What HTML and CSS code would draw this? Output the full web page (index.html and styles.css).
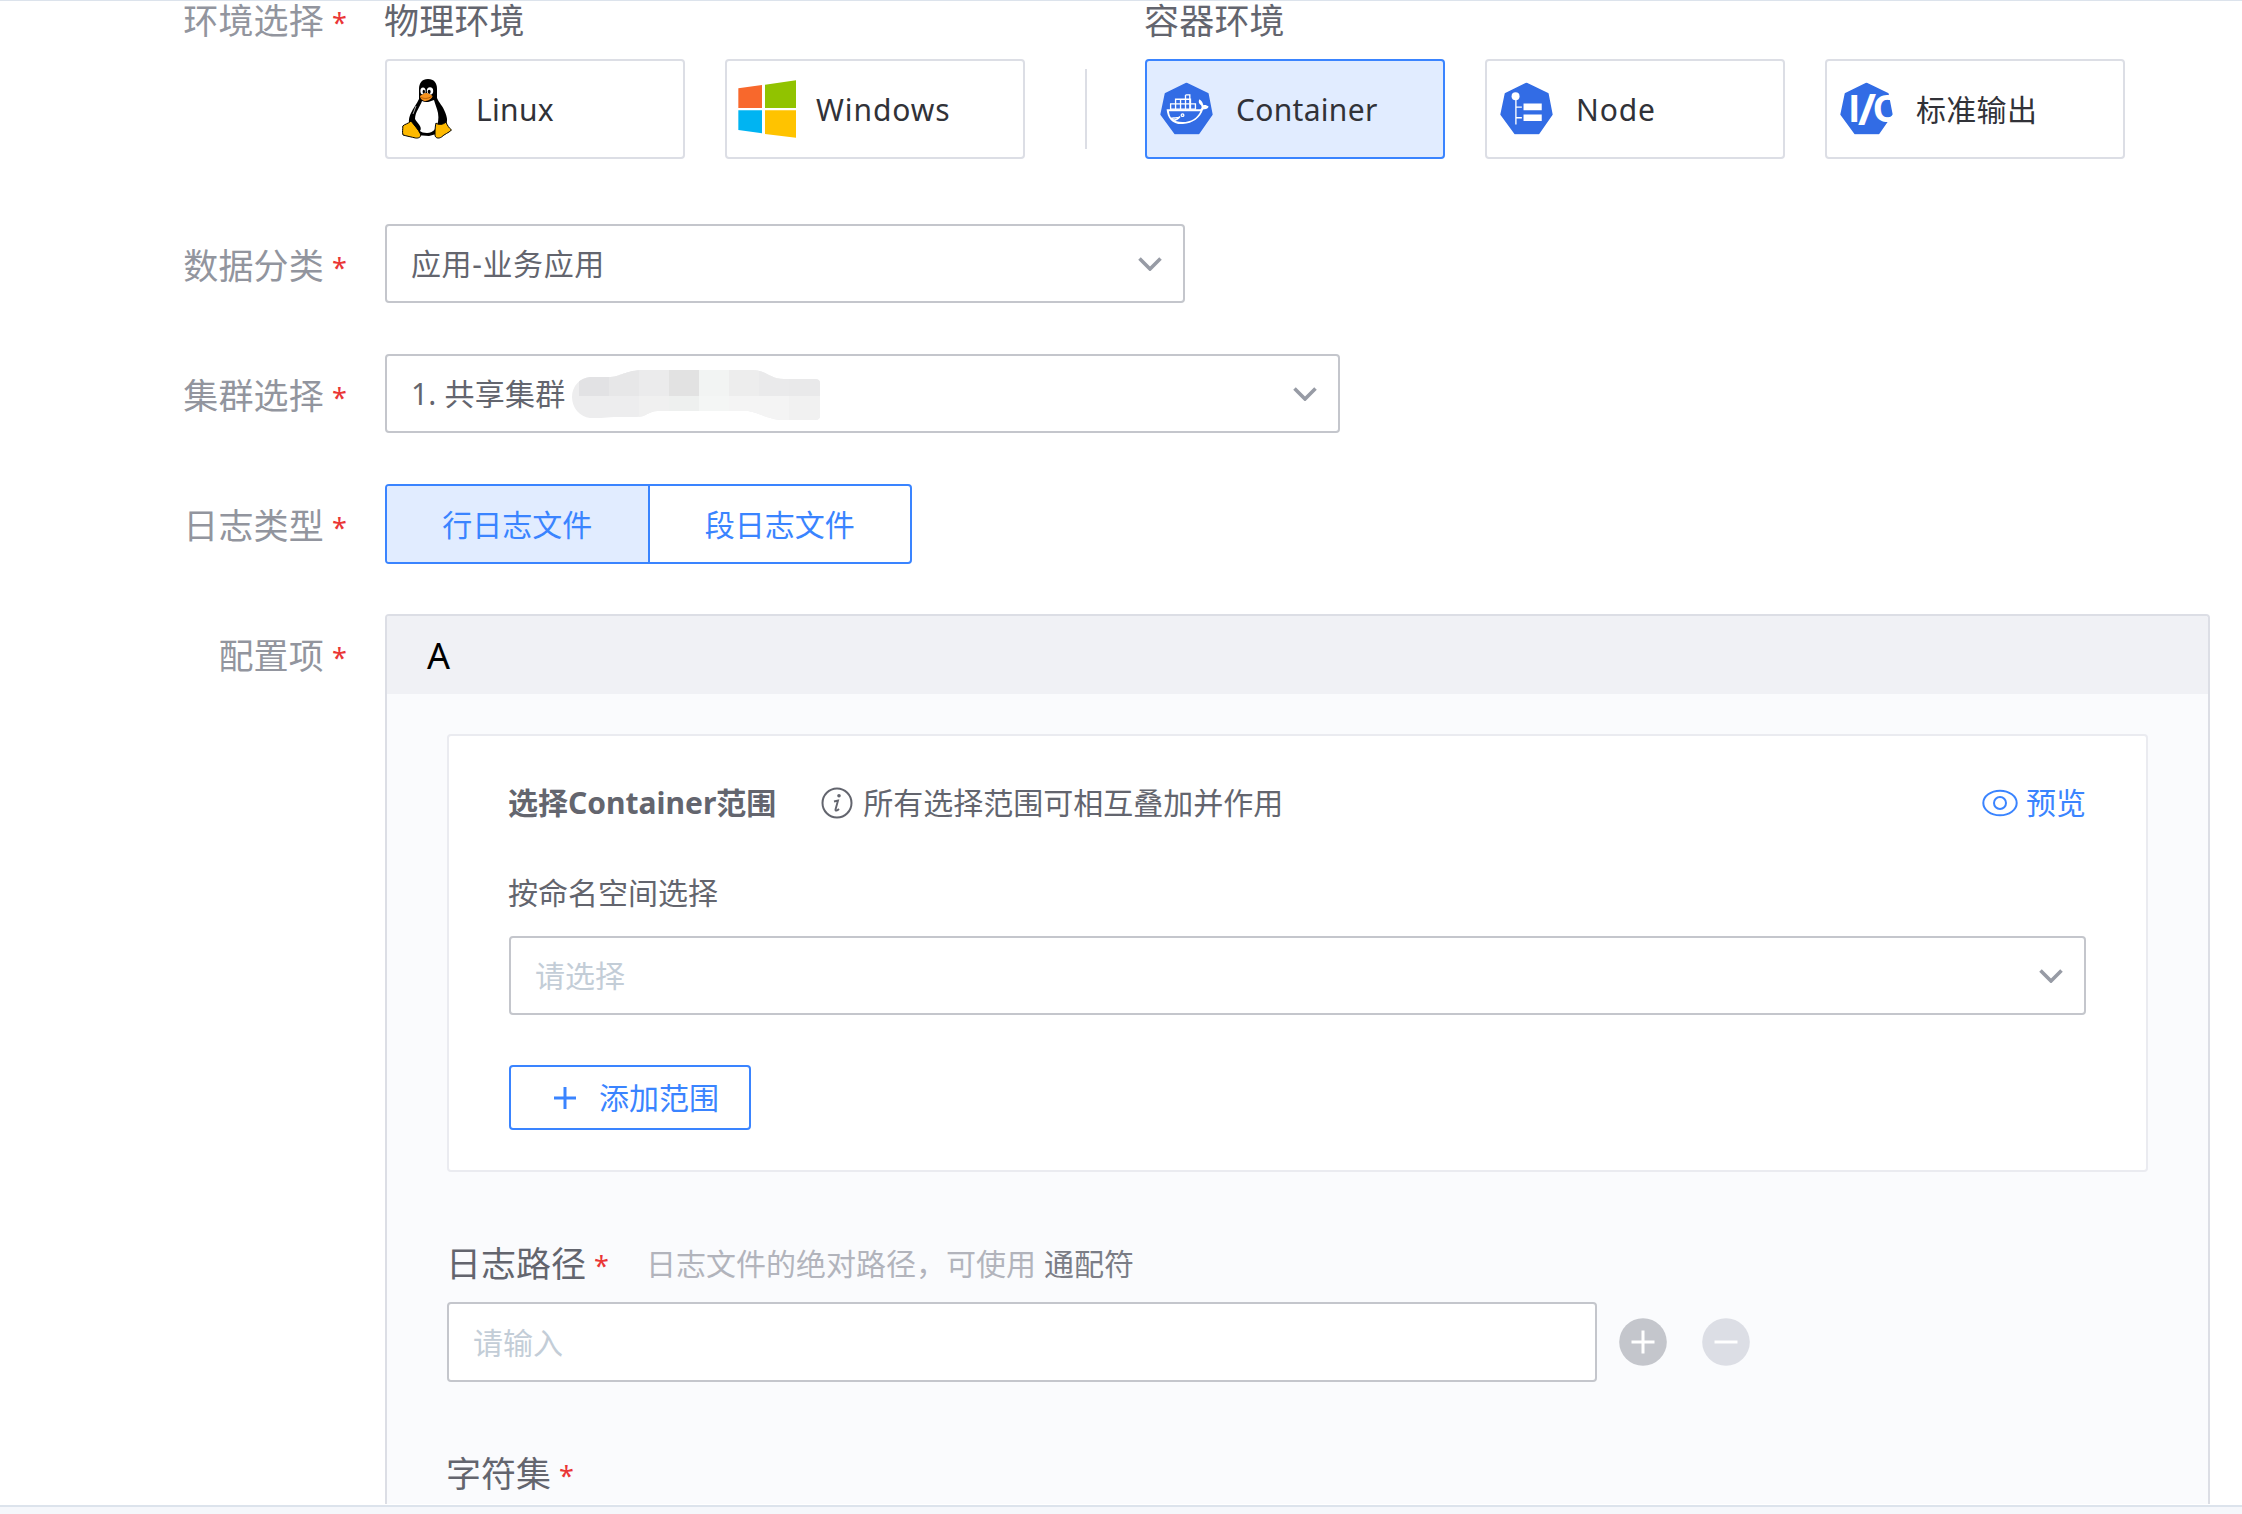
FILE: index.html
```html
<!DOCTYPE html>
<html lang="zh-CN">
<head>
<meta charset="utf-8">
<title>采集配置</title>
<link rel="stylesheet" href="styles.css">
</head>
<body>
<svg class="defs" width="0" height="0">
  <symbol id="chevron" viewBox="0 0 24 14"><path d="M1.5 1.5 12 12 22.5 1.5" fill="none" stroke="#979ba5" stroke-width="3.6"/></symbol>
  <symbol id="hept" viewBox="0 0 160 158"><path d="M80 4 144 35 156 97 116 154H46L4 97 17 35Z" fill="#326ce5" stroke="#326ce5" stroke-width="6" stroke-linejoin="round"/></symbol>
</svg>
<main class="form">
  <section class="row env-row">
    <div class="label">环境选择<i class="star">*</i></div>
    <div class="envs">
      <div class="env-group">
        <h2 class="env-title">物理环境</h2>
        <div class="cards">
          <div class="card">
            <span class="slot">
              <svg width="50" height="60" viewBox="0 0 50 60">
                <path d="M26 0c6 0 9 4 9 10v9c2 5 6 8 8 14 2 5 3 9 1 12l-6 9-11 3-13-1-6-10c-2-3-1-8 1-12 2-5 6-9 8-14V10c0-6 3-10 9-10z" fill="#000"/>
                <path d="M20 22c4 2 7 1 12-1 1 4 3 8 4 13 1 6 0 11-2 15-3 4-6 5-9 5-3 0-6-1-7-2 3-4-3-8-5-12 0-7 5-12 7-18z" fill="#fff"/>
                <ellipse cx="21" cy="12" rx="2.6" ry="3.5" fill="#fff"/><ellipse cx="28" cy="12" rx="3.2" ry="3.7" fill="#fff"/>
                <ellipse cx="21.8" cy="12.8" rx="1.2" ry="2" fill="#000"/><ellipse cx="27.2" cy="12.8" rx="1.5" ry="2.1" fill="#000"/>
                <path d="M18 17c2-1 4-3 6-3s5 2 6.500 3c0 2-4 5-7 5-2 0-5.500-2-5.500-5z" fill="#f7931e"/>
                <path d="M18.500 18c3 2 7 2 11-.5" fill="none" stroke="#9a4a00" stroke-width=".7"/>
                <path d="M14 27 11 35" stroke="#bbb" stroke-width=".9"/>
                <path d="M9 42c3 4 7 8 9.500 13 1 3-2 4.500-5 4-4-1-9-2-12.500-3-1-3 0-6-.2-9 2-2 5-2 8.200-5z" fill="#fdb900" stroke="#000" stroke-width="1"/>
                <path d="M34 44c2 2 7 2 10-1 1 3 3 6 5.500 8-3 3-7 4-10 7-3 2-6.500 1-6.500-2 0-4 0-8 1-12z" fill="#fdb900" stroke="#000" stroke-width="1"/>
              </svg>
            </span><span class="name">Linux</span>
          </div>
          <div class="card">
            <span class="slot">
              <svg width="58" height="58" viewBox="0 0 174 174">
                <path d="M1 25 72 15V84H1Z" fill="#f8682c"/><path d="M81 14 174 1V84H81Z" fill="#91c300"/>
                <path d="M1 91H72V160L1 150Z" fill="#00b4f2"/><path d="M81 91H174V173L81 162Z" fill="#ffc300"/>
              </svg>
            </span><span class="name wide">Windows</span>
          </div>
        </div>
      </div>
      <div class="divider"></div>
      <div class="env-group">
        <h2 class="env-title">容器环境</h2>
        <div class="cards">
          <div class="card active">
            <span class="slot">
              <svg class="k8s" width="53" height="53" viewBox="0 0 160 158">
                <use href="#hept"/>
                <path d="M20 81H122C127 77 126 73 124 69 117 64 115 59 119 51 126 55 129 62 131 69 137 68 143 70 147 74 143 81 136 82 130 82 122 107 99 124 69 126 38 128 22 108 20 81Z" fill="#fff"/>
                <path d="M27 87H122C113 108 94 119 68 120 54 120 44 116 38 110 48 111 54 109 58 105 46 105 38 107 33 106 29 100 28 94 27 87Z" fill="#326ce5"/>
                <path d="M37 114C47 115 55 110 60 103" fill="none" stroke="#fff" stroke-width="5"/>
                <circle cx="68" cy="99" r="4" fill="#326ce5" stroke="#fff" stroke-width="4"/>
                <path d="M32 65h75v16H32zM47 65V51h45v30M62 51v30M77 38v43M77 38h13v43M47 65v16" fill="none" stroke="#fff" stroke-width="4"/>
              </svg>
            </span><span class="name">Container</span>
          </div>
          <div class="card">
            <span class="slot">
              <svg class="k8s" width="53" height="53" viewBox="0 0 160 158">
                <use href="#hept"/>
                <circle cx="47" cy="42" r="12" fill="#fff"/>
                <path d="M48 50V127M48 75H66M48 107H66" stroke="#fff" stroke-width="4" fill="none"/>
                <path d="M71 64h55v20H71zM71 97h55v20H71z" fill="#fff"/>
              </svg>
            </span><span class="name wide">Node</span>
          </div>
          <div class="card">
            <span class="slot">
              <svg class="k8s" width="53" height="53" viewBox="0 0 160 158">
                <use href="#hept"/>
                <g class="io"><text x="24" y="121">I</text><text class="slash" x="54" y="129">/</text><text x="98" y="121">O</text></g>
              </svg>
            </span><span class="name">标准输出</span>
          </div>
        </div>
      </div>
    </div>
  </section>

  <section class="row">
    <div class="label">数据分类<i class="star">*</i></div>
    <div class="select w-category"><span class="category">应用-业务应用</span><svg class="chev"><use href="#chevron"/></svg></div>
  </section>

  <section class="row">
    <div class="label">集群选择<i class="star">*</i></div>
    <div class="select w-cluster">
      <span class="cluster">1. 共享集群</span>
      <svg class="mosaic" width="248" height="50" viewBox="0 0 248 50">
        <defs><clipPath id="blob"><path d="M0 27C0 16 8 8 18 7H34C48 8 52 0 72 0H180C194 0 198 9 212 9H243Q248 9 248 13V46Q248 50 243 50H208C194 48 184 42 176 41H86C76 41 74 48 62 47H42C32 48 26 48 18 48 8 47 0 38 0 27Z"/></clipPath></defs>
        <g clip-path="url(#blob)">
          <path d="M0 0h248v50H0z" fill="#ededee"/>
          <path d="M7 0h30v26H7z" fill="#e2e2e4"/><path d="M37 0h30v26H37z" fill="#e7e7e8"/><path d="M67 0h30v26H67z" fill="#ebebec"/>
          <path d="M97 0h30v26H97z" fill="#e2e2e2"/><path d="M127 0h30v26H127z" fill="#f2f4f3"/><path d="M157 0h30v26H157z" fill="#ededed"/>
          <path d="M187 0h30v26H187z" fill="#eaeaeb"/><path d="M217 0h31v26H217z" fill="#e9e9ea"/>
          <path d="M67 26h30v24H67z" fill="#f0f0f0"/><path d="M97 26h30v24H97z" fill="#eef0ef"/><path d="M127 26h30v24H127z" fill="#f4f6f5"/>
          <path d="M157 26h60v24H157z" fill="#f4f4f4"/><path d="M217 26h31v24H217z" fill="#f1f1f1"/>
        </g>
      </svg>
      <svg class="chev"><use href="#chevron"/></svg>
    </div>
  </section>

  <section class="row">
    <div class="label">日志类型<i class="star">*</i></div>
    <div class="tabs"><div class="tab on">行日志文件</div><div class="tab">段日志文件</div></div>
  </section>

  <section class="row config-row">
    <div class="label">配置项<i class="star">*</i></div>
    <div class="panel">
      <header class="panel-head">A</header>
      <div class="panel-body">
        <div class="scope">
          <div class="scope-head">
            <strong>选择Container范围</strong>
            <svg class="info" width="32" height="32" viewBox="0 0 32 32" fill="none" stroke="#63656e">
              <circle cx="16" cy="16" r="14.500" stroke-width="2"/>
              <path d="M13 14.500 17 13.500 14.500 22.500C14.200 24.200 16 24 18 22" stroke-width="1.900"/>
              <circle cx="18" cy="8.800" r="1.800" fill="#63656e" stroke="none"/>
            </svg>
            <span>所有选择范围可相互叠加并作用</span>
            <a class="preview">
              <svg width="36" height="28" viewBox="0 0 36 28" fill="none" stroke="#3a84ff" stroke-width="2"><ellipse cx="18" cy="14" rx="16.700" ry="12.300"/><circle cx="18" cy="14" r="6"/></svg>预览
            </a>
          </div>
          <div class="sub">按命名空间选择</div>
          <div class="select inner"><span class="ph">请选择</span><svg class="chev"><use href="#chevron"/></svg></div>
          <div class="add"><svg width="22" height="22" viewBox="0 0 22 22"><path d="M11 0V22M0 11H22" stroke="#3a84ff" stroke-width="3"/></svg>添加范围</div>
        </div>
        <div class="path-head"><span class="field-name">日志路径<i class="star">*</i></span><span class="hint">日志文件的绝对路径，可使用</span><span class="wild">通配符</span></div>
        <div class="path-row">
          <div class="input"><span class="ph">请输入</span></div>
          <svg width="48" height="48" viewBox="0 0 48 48"><circle cx="24" cy="24" r="23.800" fill="#c4c6cc"/><path d="M24 12.500V35.500M12.500 24H35.500" stroke="#fff" stroke-width="3"/></svg>
          <svg width="48" height="48" viewBox="0 0 48 48"><circle cx="24" cy="24" r="23.800" fill="#dcdee5"/><path d="M12.500 24H35.500" stroke="#fff" stroke-width="3"/></svg>
        </div>
        <div class="charset"><span class="field-name">字符集<i class="star">*</i></span></div>
      </div>
    </div>
  </section>
</main>
<footer class="foot"></footer>
</body>
</html>
```
FILE: styles.css
```css
* { box-sizing: border-box; }
body {
  margin: 0;
  height: 1514px;
  overflow: hidden;
  display: flex;
  flex-direction: column;
  background: #fff;
  color: #63656e;
  font: 30px/40px "Noto Sans", "Noto Sans CJK SC", sans-serif;
}
svg { display: block; flex: none; }
.defs { position: absolute; }
.form {
  height: 1505px;
  border-top: 1px solid #dce3ec;
  display: flex;
  flex-direction: column;
}
.foot { flex: 1; z-index: 1; border-top: 2px solid #dce3ec; background: #f5f7fb; }

.row { display: flex; height: 130px; flex: none; }
.label {
  width: 346px;
  margin-right: 39px;
  display: flex;
  justify-content: flex-end;
  font-size: 35px;
  line-height: 80px;
  padding-top: 2px;
  letter-spacing: .2px;
  color: #92959e;
}
.star {
  font-style: normal;
  font-size: 27px;
  letter-spacing: 0;
  color: #ea3636;
  width: 22px;
  padding-left: 8px;
  position: relative;
  top: 2px;
}

.env-row { height: 223px; }
.env-row .label { line-height: 40px; padding-top: 0; }
.envs { display: flex; }
.env-title { margin: 0 0 18px -1px; font-size: 35px; line-height: 40px; font-weight: 400; letter-spacing: .2px; }
.cards { display: flex; gap: 40px; }
.divider { width: 2px; height: 80px; margin: 68px 58px 0 60px; background: #dcdee5; }
.card {
  width: 300px;
  height: 100px;
  display: flex;
  align-items: center;
  gap: 9px;
  border: 2px solid #dcdee5;
  border-radius: 4px;
  color: #313238;
}
.card.active { border-color: #3a84ff; background: #e1ecff; }
.slot { width: 80px; display: flex; justify-content: center; }
.k8s { margin: -1px 1px 0 0; }
.name { padding-top: 2px; letter-spacing: .3px; }
.name.wide { letter-spacing: .9px; }
.io { font: 700 113px "Open Sans", sans-serif; fill: #fff; }
.slash { font-size: 132px; }

.select, .input {
  display: flex;
  align-items: center;
  height: 79px;
  padding: 0 21px 0 24px;
  border: 2px solid #c4c6cc;
  border-radius: 4px;
  background: #fff;
}
.chev { width: 24px; height: 14px; margin-left: auto; }
.w-category { width: 800px; }
.category { letter-spacing: .6px; }
.w-cluster { width: 955px; }
.cluster { letter-spacing: .2px; }
.mosaic { margin: 2px 0 0 7px; }
.ph { padding-top: 1px; color: #c3cdd7; }

.tabs { display: flex; width: 527px; height: 80px; border: 2px solid #3a84ff; border-radius: 4px; overflow: hidden; }
.tab { flex: 1; text-align: center; line-height: 78px; color: #3a84ff; }
.tab.on { background: #e1ecff; border-right: 2px solid #3a84ff; }

.config-row { height: 890px; }
.panel { width: 1825px; border: 2px solid #dcdee5; border-bottom: 0; border-radius: 4px 4px 0 0; background: #fafbfd; overflow: hidden; }
.panel-head { height: 78px; padding-left: 40px; background: #f0f1f5; color: #000; font-size: 36px; line-height: 79px; }
.panel-body { padding: 40px 60px; }
.scope { height: 438px; padding: 47px 60px 0; border: 2px solid #eaebf0; border-radius: 4px; background: #fff; }
.scope-head { display: flex; align-items: center; height: 40px; margin-left: -1px; }
.info { margin: 0 10px 0 45px; }
.preview { display: flex; align-items: center; gap: 8px; margin-left: auto; color: #3a84ff; }
.sub { margin: 50px 0 23px -1px; }
.inner { width: 1577px; }
.add {
  display: flex;
  align-items: center;
  gap: 23px;
  width: 242px;
  height: 65px;
  margin-top: 50px;
  padding-left: 43px;
  border: 2px solid #3a84ff;
  border-radius: 4px;
  color: #3a84ff;
}
.path-head { display: flex; align-items: center; height: 40px; margin-top: 72px; }
.field-name { display: flex; margin-left: -1px; font-size: 35px; line-height: 40px; }
.hint { margin: 0 8px 0 38px; color: #b2b4bc; }
.wild { color: #7b7d86; }
.path-row { display: flex; align-items: center; margin-top: 18px; }
.input { width: 1150px; height: 80px; margin-right: 22px; }
.path-row svg + svg { margin-left: 35px; }
.charset { margin-top: 72px; }
```
